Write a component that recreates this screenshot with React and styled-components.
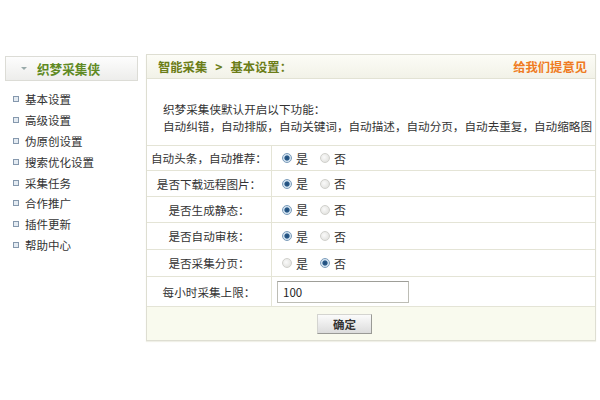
import React from 'react';
import styled, { createGlobalStyle } from 'styled-components';

const GlobalStyle = createGlobalStyle`
  body {
    margin: 0;
    background: #fff;
    font-family: "Noto Sans CJK SC", "Liberation Sans", sans-serif;
    color: #333;
  }
`;

const Page = styled.div`
  display: flex;
  align-items: flex-start;
  gap: 8px;
  padding: 54px 4px 0 5px;
  width: 600px;
  height: 400px;
  box-sizing: border-box;
`;

const Sidebar = styled.div`
  width: 133px;
  margin-top: 2px;
  flex-shrink: 0;
`;

const SideHead = styled.div`
  height: 25px;
  box-sizing: border-box;
  border: 1px solid #dcdcd6;
  background: linear-gradient(#fdfdfd, #ededeb);
  display: flex;
  align-items: center;
  padding-left: 15px;
  gap: 10px;
  font-size: 12.6px;
  font-weight: bold;
  color: #5f8a23;
`;

const Caret = styled.span`
  width: 0;
  height: 0;
  border-left: 3px solid transparent;
  border-right: 3px solid transparent;
  border-top: 3px solid #9aa;
`;

const Menu = styled.ul`
  list-style: none;
  margin: 0;
  padding: 8px 0 0 8px;
`;

const MenuItem = styled.li`
  display: flex;
  align-items: center;
  gap: 6px;
  height: 20.8px;
  font-size: 11.5px;
  color: #333;
`;

const Bullet = styled.span`
  width: 4px;
  height: 4px;
  border: 1px solid #8598ad;
  background: #e4ebf2;
`;

const Panel = styled.div`
  width: 450px;
  box-sizing: border-box;
  border: 1px solid #deded2;
  box-shadow: 0 1px 1px #f0f0e8;
`;

const PanelHead = styled.div`
  height: 24px;
  box-sizing: border-box;
  background: linear-gradient(#fcfcf6, #f2f2e8);
  border-bottom: 1px solid #e2e2d4;
  display: flex;
  align-items: center;
  justify-content: space-between;
  padding: 0 8px 0 11px;
  font-size: 12.3px;
  font-weight: bold;
`;

const Crumb = styled.span`
  color: ${p => p.color};
`;

const Sep = styled.span`
  margin: 0 8px;
`;

const Intro = styled.div`
  padding: 22px 0 10px 16px;
  font-size: 11.6px;
  line-height: 17px;
  color: #333;
  white-space: nowrap;
`;

const Row = styled.div`
  display: grid;
  grid-template-columns: 125px 1fr;
  height: ${p => p.h}px;
  border-top: 1px solid #e4e4d6;
  box-sizing: border-box;
  font-size: 11.6px;
`;

const Label = styled.div`
  display: flex;
  align-items: center;
  justify-content: center;
  border-right: 1px solid #e4e4d6;
  color: #333;
`;

const Value = styled.div`
  display: flex;
  align-items: center;
  padding-left: ${p => p.pad}px;
`;

const Option = styled.label`
  display: flex;
  align-items: center;
  gap: 4px;
  margin-right: 12px;
  color: #333;
  font-size: 12px;
`;

const Radio = styled.span`
  width: 10px;
  height: 10px;
  border-radius: 50%;
  box-sizing: border-box;
  border: 1px solid ${p => (p.on ? '#7b9cbb' : '#d0d0cc')};
  background: ${p =>
    p.on
      ? 'radial-gradient(circle at 50% 50%, #1c4a78 0, #2d5d8c 2.2px, #c9dcec 3px, #eef4f9 5px)'
      : 'radial-gradient(circle at 40% 40%, #fafafa, #dcdcd8)'};
`;

const Input = styled.div`
  width: 132px;
  height: 22px;
  box-sizing: border-box;
  border: 1px solid #bdbdb5;
  border-top-color: #9e9e98;
  background: #fff;
  font-size: 11.5px;
  padding-left: 5px;
  display: flex;
  align-items: center;
  color: #222;
`;

const Footer = styled.div`
  height: 33px;
  border-top: 1px solid #e4e4d6;
  background: #f9faee;
  display: flex;
  align-items: center;
  padding-left: 170px;
`;

const Button = styled.div`
  width: 55px;
  height: 20px;
  box-sizing: border-box;
  border: 1px solid #d4d4d0;
  border-right-color: #9a9a96;
  border-bottom-color: #9a9a96;
  background: linear-gradient(#fbfbfb, #dcdcdc);
  display: flex;
  align-items: center;
  justify-content: center;
  font-size: 11.5px;
  font-weight: bold;
  color: #333;
`;

const menu = ['基本设置', '高级设置', '伪原创设置', '搜索优化设置', '采集任务', '合作推广', '插件更新', '帮助中心'];

const options = [
  { label: '自动头条，自动推荐：', yes: true, h: 25 },
  { label: '是否下载远程图片：', yes: true, h: 26 },
  { label: '是否生成静态：', yes: true, h: 26 },
  { label: '是否自动审核：', yes: true, h: 27 },
  { label: '是否采集分页：', yes: false, h: 27 },
];

export default function App() {
  return (
    <Page>
      <GlobalStyle />
      <Sidebar>
        <SideHead>
          <Caret />
          织梦采集侠
        </SideHead>
        <Menu>
          {menu.map(m => (
            <MenuItem key={m}>
              <Bullet />
              {m}
            </MenuItem>
          ))}
        </Menu>
      </Sidebar>
      <Panel>
        <PanelHead>
          <Crumb color="#6b7d17">
            智能采集<Sep>&gt;</Sep>基本设置：
          </Crumb>
          <Crumb color="#ef7b22">给我们提意见</Crumb>
        </PanelHead>
        <Intro>
          织梦采集侠默认开启以下功能：
          <br />
          自动纠错，自动排版，自动关键词，自动描述，自动分页，自动去重复，自动缩略图
        </Intro>
        {options.map(o => (
          <Row key={o.label} h={o.h}>
            <Label>{o.label}</Label>
            <Value pad={10}>
              <Option>
                <Radio on={o.yes} />是
              </Option>
              <Option>
                <Radio on={!o.yes} />否
              </Option>
            </Value>
          </Row>
        ))}
        <Row h={30}>
          <Label>每小时采集上限：</Label>
          <Value pad={5}>
            <Input>100</Input>
          </Value>
        </Row>
        <Footer>
          <Button>确定</Button>
        </Footer>
      </Panel>
    </Page>
  );
}
